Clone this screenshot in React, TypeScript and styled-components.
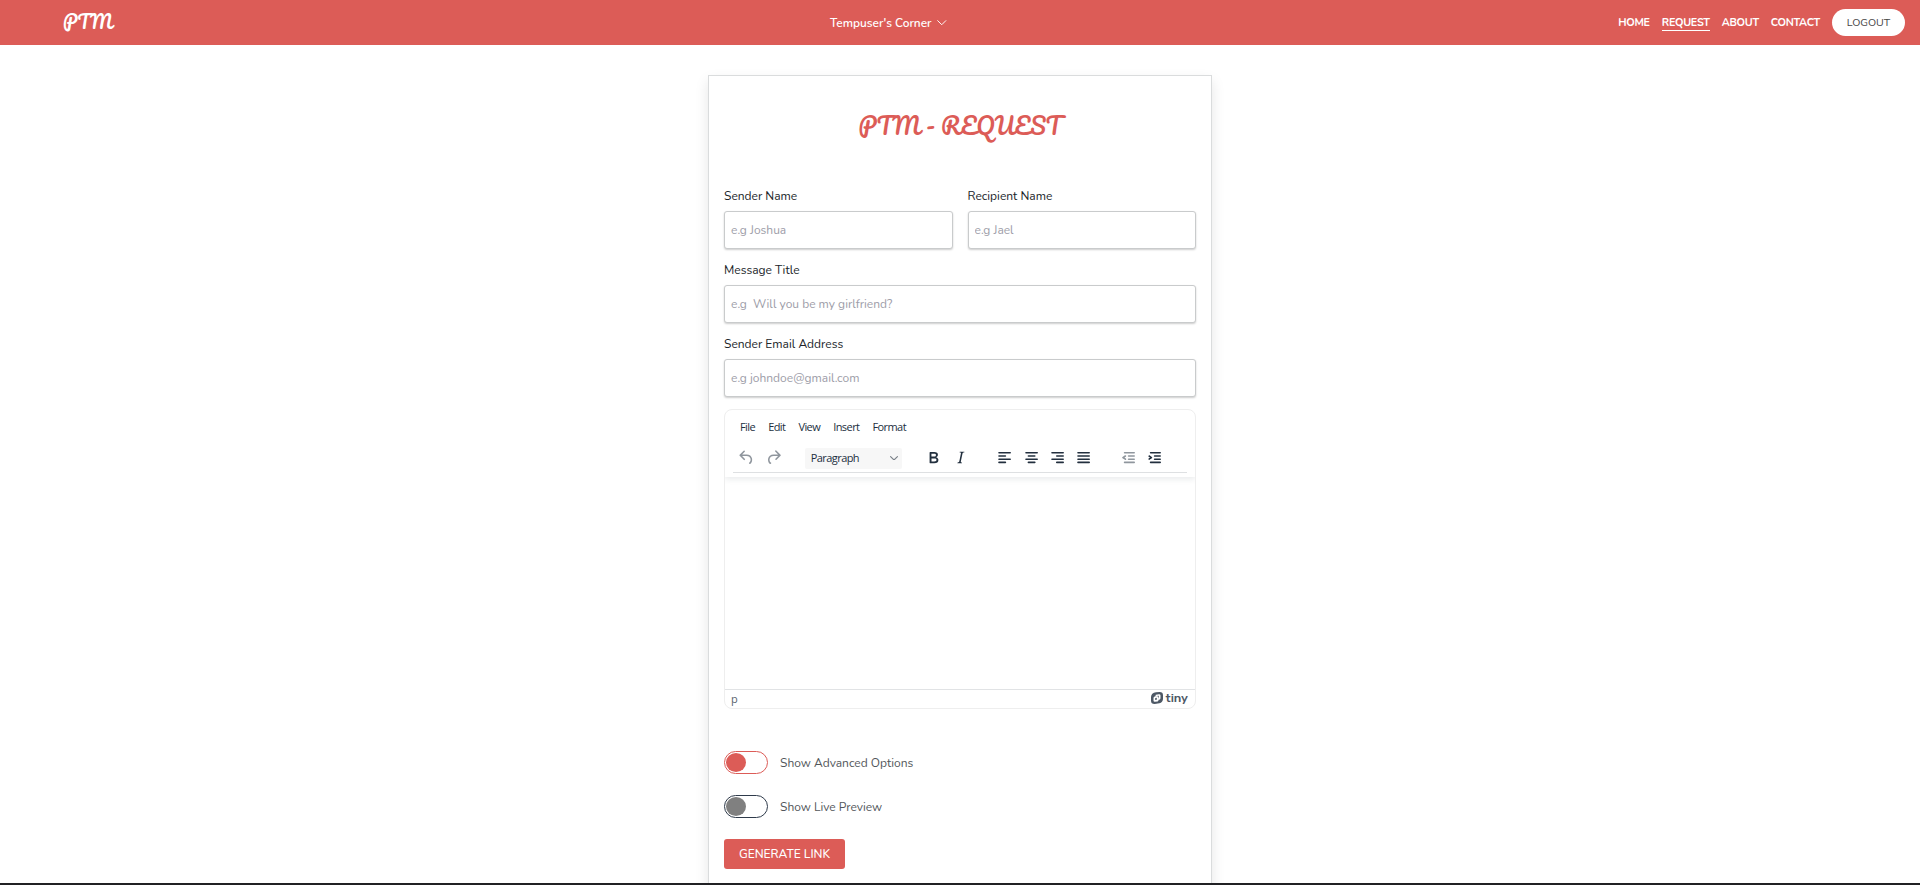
import React from "react";
import styled, { createGlobalStyle } from "styled-components";

const brand = "#dc5c57";
const ink = "#222f3e";

const GlobalStyle = createGlobalStyle`
  *, *::before, *::after { box-sizing: border-box; }
  body {
    margin: 0;
    background: #fff;
    font-family: "Nunito", "Lato", sans-serif;
    font-size: 12px;
    color: #212529;
  }
`;

const Page = styled.div`
  display: flex;
  flex-direction: column;
  height: 885px;
  overflow: hidden;
  border-bottom: 2px solid #212124;
`;

const Header = styled.header`
  display: flex;
  align-items: center;
  flex: none;
  height: 45px;
  padding: 0 15px 0 63px;
  background: ${brand};
  color: #fff;
`;

const Logo = styled.a`
  width: 767px;
  font-family: "Pacifico", cursive;
  font-size: 18px;
  line-height: 44px;
  margin-top: -1px;
`;

const UserMenu = styled.button`
  display: flex;
  align-items: center;
  gap: 6px;
  padding: 0;
  border: 0;
  background: none;
  color: inherit;
  font: 600 11.9px/18px "Nunito", "Lato", sans-serif;
`;

const Nav = styled.nav`
  display: flex;
  align-items: center;
  gap: 12px;
  margin-left: auto;
`;

const NavLink = styled.a<{ $active?: boolean }>`
  font-weight: 700;
  font-size: 10.8px;
  letter-spacing: -0.3px;
  line-height: 15px;
  border-bottom: 1px solid ${(p) => (p.$active ? "#fff" : "transparent")};
  margin-top: 1px;
`;

const Logout = styled.button`
  width: 73px;
  height: 27px;
  border: 0;
  border-radius: 14px;
  padding: 0;
  background: #fff;
  color: #444;
  font: 400 10.6px/27px "Nunito", "Lato", sans-serif;
`;

const Card = styled.main`
  flex: none;
  width: 504px;
  height: 860px;
  margin: 30px auto 0;
  padding: 0 15px;
  border: 1px solid #dadcdd;
  box-shadow: 0 6px 13px rgba(0, 0, 0, 0.1);
`;

const Title = styled.h1`
  margin: 0;
  padding: 28px 0 39px;
  color: ${brand};
  font: 400 22.5px/44px "Pacifico", cursive;
  text-align: center;
`;

const FieldRow = styled.div`
  display: flex;
  gap: 15px;
  margin-bottom: 12px;
`;

const Field = styled.label`
  display: flex;
  flex: 1;
  flex-direction: column;
  gap: 6px;
  min-width: 0;
  line-height: 18px;
`;

const Input = styled.input`
  width: 100%;
  height: 38px;
  padding: 0 6px;
  border: 1px solid #c9cbcc;
  border-radius: 3px;
  box-shadow: 0 1px 2px rgba(0, 0, 0, 0.2);
  background: #fff;
  font: 400 12px "Nunito", "Lato", sans-serif;
  &::placeholder { color: #9d9da8; opacity: 1; }
`;

const Editor = styled.section`
  display: flex;
  flex-direction: column;
  height: 300px;
  border: 1px solid #eee;
  border-radius: 8px;
  overflow: hidden;
  color: ${ink};
  font-family: "Open Sans", "Noto Sans", sans-serif;
  font-size: 11px;
`;

const EditorHead = styled.div`
  flex: none;
  height: 67px;
  box-shadow: 0 2px 6px rgba(34, 47, 62, 0.1);
`;

const MenuBar = styled.div`
  display: flex;
  gap: 13px;
  height: 34px;
  padding: 0 15px;
  line-height: 33px;
  letter-spacing: -0.57px;
`;

const Toolbar = styled.div`
  display: flex;
  align-items: center;
  gap: 18px;
  height: 29px;
  margin: 0 8px;
  border-bottom: 1px solid #dee0e2;
`;

const ToolGroup = styled.div<{ $gap?: number }>`
  display: flex;
  gap: ${(p) => p.$gap ?? 0}px;
`;

const ToolButton = styled.button<{ $dim?: boolean }>`
  display: flex;
  align-items: center;
  justify-content: center;
  width: 26.4px;
  height: 22px;
  padding: 0;
  border: 0;
  background: none;
  color: ${ink};
  opacity: ${(p) => (p.$dim ? 0.5 : 1)};
`;

const BlockSelect = styled.div`
  display: flex;
  align-items: center;
  justify-content: space-between;
  width: 97px;
  height: 21px;
  margin-right: 1px;
  padding: 0 4px 1px 6px;
  border-radius: 2px;
  background: #f7f7f7;
  letter-spacing: -0.57px;
  svg { color: #7c838b; margin-top: 1px; }
`;

const Canvas = styled.div`
  flex: 1;
`;

const StatusBar = styled.footer`
  display: flex;
  align-items: center;
  justify-content: space-between;
  flex: none;
  height: 19px;
  padding: 0 7px 1px 6px;
  border-top: 1px solid #e1e3e5;
  color: #59636e;
`;

const TinyMark = styled.span`
  display: flex;
  align-items: center;
  gap: 3px;
  margin-top: -2px;
  color: #4d5865;
  font: 500 12px/16px "Rubik", "Nunito", sans-serif;
`;

const Options = styled.div`
  display: flex;
  flex-direction: column;
  gap: 21px;
  padding: 42px 0 21px;
`;

const Option = styled.div`
  display: flex;
  align-items: center;
  gap: 12px;
  height: 23px;
  color: #53575b;
`;

const Switch = styled.span<{ $line: string; $knob: string }>`
  display: flex;
  align-items: center;
  width: 44px;
  height: 23px;
  padding: 0 1px;
  border: 1px solid ${(p) => p.$line};
  border-radius: 12px;
  &::before {
    content: "";
    width: 20px;
    height: 19px;
    border-radius: 50%;
    background: ${(p) => p.$knob};
  }
`;

const Generate = styled.button`
  width: 121px;
  height: 30px;
  border: 0;
  border-radius: 3px;
  padding: 0;
  background: ${brand};
  color: #fff;
  font: 500 12px/30px "Nunito", "Lato", sans-serif;
`;

const line = (x: number, y: number, w: number) =>
  `M${x + 1} ${y}h${w - 2}a1 1 0 0 1 0 2h-${w - 2}a1 1 0 0 1 0-2Z`;

const icons = {
  undo: "M6.4 8H12c3.7 0 6.2 2 6.8 5.1.6 2.7-.4 5.6-2.3 6.8a1 1 0 0 1-1-1.8c1.1-.6 1.8-2.7 1.4-4.6-.5-2.1-2.1-3.5-4.9-3.5H6.4l3.3 3.3a1 1 0 1 1-1.4 1.4l-5-5a1 1 0 0 1 0-1.4l5-5a1 1 0 0 1 1.4 1.4L6.4 8Z",
  redo: "M17.6 10H12c-2.8 0-4.4 1.4-4.9 3.5-.4 2 .3 4 1.4 4.6a1 1 0 1 1-1 1.8c-2-1.2-2.9-4.1-2.3-6.8.6-3 3-5.1 6.8-5.1h5.6l-3.3-3.3a1 1 0 1 1 1.4-1.4l5 5a1 1 0 0 1 0 1.4l-5 5a1 1 0 0 1-1.4-1.4l3.3-3.3Z",
  bold: "M7.8 19c-.3 0-.5 0-.6-.2l-.2-.5V5.7c0-.2 0-.4.2-.5l.6-.2h5c1.5 0 2.7.3 3.5 1 .7.6 1.1 1.4 1.1 2.5a3 3 0 0 1-.6 1.9c-.4.6-1 1-1.6 1.2.4.1.9.3 1.3.6s.8.7 1 1.2c.4.4.5 1 .5 1.6 0 1.3-.4 2.3-1.3 3-.8.7-2.1 1-3.8 1H7.8Zm5-8.3c.6 0 1.2-.1 1.6-.5.4-.3.6-.7.6-1.3 0-1.1-.8-1.7-2.3-1.7H9.3v3.5h3.4Zm.5 6c.7 0 1.3-.1 1.7-.4.4-.4.6-.9.6-1.5s-.2-1-.7-1.4c-.4-.3-1-.4-2-.4H9.4v3.8h4Z",
  italic: "m16.7 4.7-.1.9h-.3c-.6 0-1 0-1.4.3-.3.3-.4.6-.5 1.1l-2.1 9.8v.6c0 .5.4.8 1.4.8h.2l-.2.8H8l.2-.8h.2c1.1 0 1.8-.5 2-1.5l2-9.8.1-.5c0-.6-.4-.8-1.4-.8h-.3l.2-.9h5.8Z",
  left: line(4, 5, 16) + line(4, 9, 10) + line(4, 13, 16) + line(4, 17, 10),
  center: line(4, 5, 16) + line(7, 9, 10) + line(4, 13, 16) + line(7, 17, 10),
  right: line(4, 5, 16) + line(10, 9, 10) + line(4, 13, 16) + line(10, 17, 10),
  justify: line(4, 5, 16) + line(4, 9, 16) + line(4, 13, 16) + line(4, 17, 16),
  outdent:
    line(6, 5, 14) + line(11, 9, 9) + line(11, 13, 9) + line(6, 17, 14) +
    "M8.6 13.2a1 1 0 0 1-1.2 1.6l-3-2a1 1 0 0 1 0-1.6l3-2a1 1 0 0 1 1.2 1.6L6.8 12l1.8 1.2Z",
  indent:
    line(6, 5, 14) + line(11, 9, 9) + line(11, 13, 9) + line(6, 17, 14) +
    "M4.5 13.2a1 1 0 0 0 1.1 1.6l3-2a1 1 0 0 0 0-1.6l-3-2a1 1 0 0 0-1.1 1.6L6.3 12l-1.8 1.2Z",
};

function Tool({ name, dim }: { name: keyof typeof icons; dim?: boolean }) {
  return (
    <ToolButton type="button" aria-label={name} $dim={dim}>
      <svg width="19.2" height="19.2" viewBox="0 0 24 24" fill="currentColor">
        <path d={icons[name]} />
      </svg>
    </ToolButton>
  );
}

function Chevron({ width, stroke }: { width: number; stroke: number }) {
  return (
    <svg width={width} height={width * 0.6} viewBox="0 0 10 6" fill="none" stroke="currentColor"
      strokeWidth={stroke} strokeLinecap="round" strokeLinejoin="round">
      <path d="M.7.7 5 5 9.3.7" />
    </svg>
  );
}

function TextField({ label, hint }: { label: string; hint: string }) {
  return (
    <Field>
      {label}
      <Input placeholder={hint} />
    </Field>
  );
}

export default function App() {
  return (
    <Page>
      <GlobalStyle />
      <Header>
        <Logo>PTM</Logo>
        <UserMenu type="button">
          Tempuser's Corner
          <Chevron width={9.5} stroke={1} />
        </UserMenu>
        <Nav>
          <NavLink>HOME</NavLink>
          <NavLink $active>REQUEST</NavLink>
          <NavLink>ABOUT</NavLink>
          <NavLink>CONTACT</NavLink>
          <Logout type="button">LOGOUT</Logout>
        </Nav>
      </Header>
      <Card>
        <Title>PTM - REQUEST</Title>
        <FieldRow>
          <TextField label="Sender Name" hint="e.g Joshua" />
          <TextField label="Recipient Name" hint="e.g Jael" />
        </FieldRow>
        <FieldRow>
          <TextField label="Message Title" hint="e.g  Will you be my girlfriend?" />
        </FieldRow>
        <FieldRow>
          <TextField label="Sender Email Address" hint="e.g johndoe@gmail.com" />
        </FieldRow>
        <Editor>
          <EditorHead>
            <MenuBar>
              <span>File</span>
              <span>Edit</span>
              <span>View</span>
              <span>Insert</span>
              <span>Format</span>
            </MenuBar>
            <Toolbar>
              <ToolGroup $gap={1}>
                <Tool name="undo" dim />
                <Tool name="redo" dim />
              </ToolGroup>
              <BlockSelect>
                Paragraph
                <Chevron width={8} stroke={1.4} />
              </BlockSelect>
              <ToolGroup>
                <Tool name="bold" />
                <Tool name="italic" />
              </ToolGroup>
              <ToolGroup>
                <Tool name="left" />
                <Tool name="center" />
                <Tool name="right" />
                <Tool name="justify" />
              </ToolGroup>
              <ToolGroup>
                <Tool name="outdent" dim />
                <Tool name="indent" />
              </ToolGroup>
            </Toolbar>
          </EditorHead>
          <Canvas />
          <StatusBar>
            <span>p</span>
            <TinyMark>
              <svg width="12" height="12" viewBox="0 0 12 12">
                <path
                  fill="currentColor"
                  fillRule="evenodd"
                  d="M5 .3 8.6 0Q12 0 12 3.2V7Q11.8 10.6 8.4 11.3L3.6 12Q0 12 0 8.8V5Q.2 1.1 5 .3ZM4.8 2.7 8 2.2Q9.5 2.1 9.5 3.5V6.2Q9.4 7.4 8.2 7.7L7.5 7.8V8.3Q7.4 9.2 6.6 9.4L3.9 9.8Q2.5 9.9 2.5 8.5V6Q2.6 4.8 3.8 4.5L4.6 4.3V3.3ZM5.7 4.1 7.8 3.8V6.2L7.4 6.3V5.4Q7.3 4.2 6 4.3L5.7 4.4ZM4.2 6.1 5.8 5.8V7.8L4.2 8.1Z"
                />
              </svg>
              tiny
            </TinyMark>
          </StatusBar>
        </Editor>
        <Options>
          <Option>
            <Switch $line={brand} $knob={brand} />
            Show Advanced Options
          </Option>
          <Option>
            <Switch $line="#2f3b4b" $knob="#808080" />
            Show Live Preview
          </Option>
        </Options>
        <Generate type="button">GENERATE LINK</Generate>
      </Card>
    </Page>
  );
}
